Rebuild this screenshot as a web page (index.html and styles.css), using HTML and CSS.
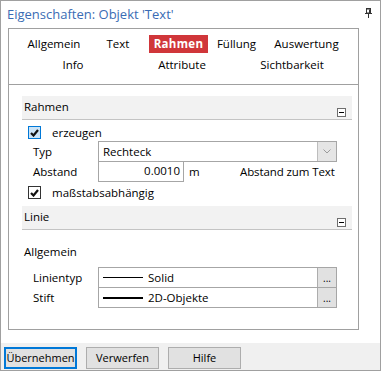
FILE: index.html
```html
<!DOCTYPE html>
<html lang="de">

<head>
    <meta charset="UTF-8">
    <title>Eigenschaften</title>
    <link rel="stylesheet" href="styles.css">
</head>

<body>
    <div class="window">
        <div class="titlebar">
            <span class="title">Eigenschaften: Objekt 'Text'</span>
            <svg class="pin" width="7" height="10" viewBox="0 0 7 10">
                <rect x="1" y="0" width="5" height="1" fill="#333"/>
                <rect x="1.5" y="1" width="4" height="4" fill="#fff" stroke="#333" stroke-width="1"/>
                <rect x="4" y="1.5" width="1" height="3.5" fill="#333"/>
                <rect x="0" y="5" width="7" height="1" fill="#333"/>
                <rect x="3" y="6" width="1" height="4" fill="#333"/>
            </svg>
        </div>

        <div class="panel">
            <div class="tabs">
                <div class="tabrow">
                    <span class="tab w66">Allgemein</span>
                    <span class="tab w62">Text</span>
                    <span class="tab w59 active">Rahmen</span>
                    <span class="tab w57">Füllung</span>
                    <span class="tab w83">Auswertung</span>
                </div>
                <div class="tabrow row2">
                    <span class="tab w128">Info</span>
                    <span class="tab w90">Attribute</span>
                    <span class="tab w130">Sichtbarkeit</span>
                </div>
            </div>

            <div class="section">
                <div class="sechead">
                    <span>Rahmen</span>
                    <span class="collapse"></span>
                </div>
                <div class="checkrow first">
                    <span class="check focus">
                        <svg width="9" height="8" viewBox="0 0 9 8"><path d="M1 4l2.5 2.5L8 1" fill="none" stroke="#111" stroke-width="2.2"/></svg>
                    </span>
                    <span>erzeugen</span>
                </div>
                <div class="frow typ">
                    <span class="flabel">Typ</span>
                    <div class="field select">
                        <span class="fval">Rechteck</span>
                        <span class="dropbtn">
                            <svg width="8" height="5" viewBox="0 0 8 5"><path d="M0.5 0.5L4 4L7.5 0.5" fill="none" stroke="#9a9a9a" stroke-width="1"/></svg>
                        </span>
                    </div>
                </div>
                <div class="frow">
                    <span class="flabel">Abstand</span>
                    <div class="field num">0.0010</div>
                    <span class="unit">m</span>
                    <span class="hint">Abstand zum Text</span>
                </div>
                <div class="checkrow second">
                    <span class="check">
                        <svg width="9" height="8" viewBox="0 0 9 8"><path d="M1 4l2.5 2.5L8 1" fill="none" stroke="#111" stroke-width="2.2"/></svg>
                    </span>
                    <span>maßstabsabhängig</span>
                </div>
            </div>

            <div class="section linie">
                <div class="sechead">
                    <span>Linie</span>
                    <span class="collapse"></span>
                </div>
                <div class="group">Allgemein</div>
                <div class="frow typ">
                    <span class="flabel">Linientyp</span>
                    <div class="field select">
                        <span class="fval"><span class="sample thin"></span>Solid</span>
                        <span class="dropbtn dots">...</span>
                    </div>
                </div>
                <div class="frow">
                    <span class="flabel">Stift</span>
                    <div class="field select">
                        <span class="fval"><span class="sample thick"></span>2D-Objekte</span>
                        <span class="dropbtn dots">...</span>
                    </div>
                </div>
            </div>
        </div>

        <div class="footer">
            <button class="btn default">Übernehmen</button>
            <button class="btn">Verwerfen</button>
            <button class="btn">Hilfe</button>
        </div>
    </div>
</body>

</html>
```

FILE: styles.css
```css
body {
    margin: 0;
    padding: 0;
    font-family: "Open Sans", "Noto Sans", sans-serif;
    font-size: 11.5px;
    color: #000;
    background-color: #fff;
}

.window {
    width: 381px;
    height: 371px;
    box-sizing: border-box;
    border: 1px solid #a0a0a0;
    display: flex;
    flex-direction: column;
}

.titlebar {
    height: 27px;
    display: flex;
    align-items: center;
    justify-content: space-between;
    padding: 0 8px 0 6px;
}

.title {
    color: #3a6cb4;
    font-size: 13px;
    margin-top: -2px;
}

.pin {
    margin-top: -4px;
}

.panel {
    width: 351px;
    height: 302px;
    box-sizing: border-box;
    margin-left: 7px;
    border: 1px solid #a0a0a0;
}

.tabs {
    height: 56px;
    box-sizing: border-box;
    padding: 6px 0 0 12px;
    border-bottom: 1px solid #a0a0a0;
}

.tabrow {
    display: flex;
    height: 18px;
}

.tabrow.row2 {
    margin-top: 3px;
    margin-left: -12px;
}

.tab {
    text-align: center;
    line-height: 18px;
}

.tab.active {
    background-color: #d0363a;
    color: #fff;
    font-weight: bold;
    letter-spacing: 0.3px;
}

.w57 { width: 57px; }
.w59 { width: 59px; }
.w62 { width: 62px; }
.w66 { width: 66px; }
.w83 { width: 83px; }
.w90 { width: 90px; }
.w128 { width: 128px; }
.w130 { width: 130px; }

.section {
    margin: 11px 6px 0 13px;
}

.section.linie {
    margin-top: 7px;
}

.sechead {
    height: 24px;
    box-sizing: border-box;
    background-color: #f2f2f2;
    border-bottom: 1px solid #c4c4c4;
    padding: 1px 6px 0 2px;
    display: flex;
    justify-content: space-between;
    line-height: 19px;
    position: relative;
}

.collapse {
    position: absolute;
    right: 6px;
    bottom: 2px;
    width: 7px;
    height: 7px;
    border: 1px solid #6e6e6e;
    background-color: #fff;
}

.collapse::after {
    content: "";
    position: absolute;
    left: 1px;
    top: 3px;
    width: 5px;
    height: 1px;
    background-color: #000;
}

.checkrow {
    display: flex;
    align-items: center;
    height: 13px;
    padding-left: 6px;
}

.checkrow.first {
    margin-top: 6px;
}

.checkrow.second {
    margin-top: 4px;
}

.check {
    width: 13px;
    height: 13px;
    box-sizing: border-box;
    border: 1px solid #333;
    background-color: #fff;
    margin-right: 11px;
    display: flex;
    align-items: center;
    justify-content: center;
}

.check.focus {
    border-color: #0078d7;
    background-color: #cce4f7;
}

.frow {
    display: flex;
    align-items: center;
    height: 21px;
    margin-top: -1px;
}

.frow.typ {
    margin-top: 2px;
}

.flabel {
    width: 65px;
    padding-left: 11px;
}

.field {
    height: 21px;
    box-sizing: border-box;
    border: 1px solid #a6a6a6;
    background-color: #fff;
}

.field.select {
    width: 239px;
    display: flex;
    align-items: stretch;
}

.fval {
    flex: 1;
    padding-left: 4px;
    line-height: 18px;
    display: flex;
    align-items: center;
}

.dropbtn {
    width: 18px;
    border-left: 1px solid #bdbdbd;
    background-color: #e5e5e5;
    display: flex;
    align-items: center;
    justify-content: center;
}

.dropbtn.dots {
    background-color: #e1e1e1;
    border-left-color: #adadad;
    font-size: 10px;
    line-height: 14px;
    align-items: flex-end;
    padding-bottom: 2px;
}

.field.num {
    width: 86px;
    text-align: right;
    padding-right: 3px;
    line-height: 18px;
}

.unit {
    margin-left: 5px;
    width: 46px;
}

.hint {
    margin-left: 5px;
    letter-spacing: -0.1px;
}

.group {
    margin-top: 14px;
    padding-left: 2px;
    height: 16px;
    line-height: 16px;
}

.linie .frow.typ {
    margin-top: 7px;
}

.sample {
    display: inline-block;
    width: 40px;
    margin-right: 5px;
    background-color: #000;
}

.sample.thin {
    height: 1px;
}

.sample.thick {
    height: 2px;
}

.footer {
    margin-top: auto;
    height: 27px;
    background-color: #f0f0f0;
    display: flex;
    align-items: center;
    gap: 9px;
    padding-left: 3px;
}

.btn {
    width: 73px;
    height: 22px;
    box-sizing: border-box;
    font-family: inherit;
    font-size: 11px;
    color: #000;
    background-color: #e1e1e1;
    border: 1px solid #adadad;
    padding: 0;
    margin-top: 2px;
}

.btn.default {
    border: 2px solid #0078d7;
}
```
